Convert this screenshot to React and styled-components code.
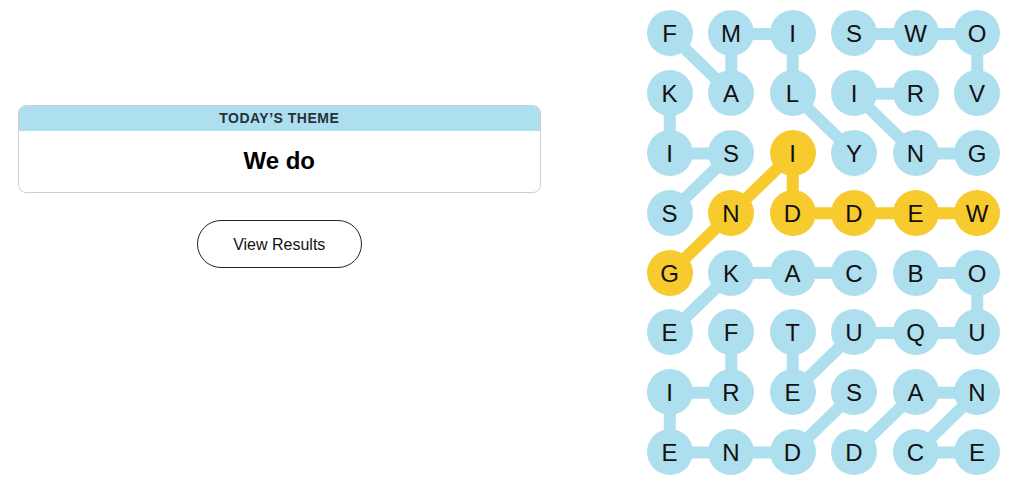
import React from 'react';
import styled, {createGlobalStyle} from 'styled-components';

const CELL_W = 61.5;
const CELL_H = 59.8;

const BLUE = '#aedfee';
const YELLOW = '#f7cb2d';

const GlobalStyle = createGlobalStyle`
  body {
    margin: 0;
    background: #fff;
    font-family: "Liberation Sans", Arial, sans-serif;
    color: #000;
  }
`

const letters = [
    'FMISWO',
    'KALIRV',
    'ISIYNG',
    'SNDDEW',
    'GKACBO',
    'EFTUQU',
    'IRESAN',
    'ENDDCE',
];

const words = [
    {name: 'FAMILY', path: [[0, 0], [1, 1], [0, 1], [0, 2], [1, 2], [2, 3]]},
    {name: 'KISS', path: [[1, 0], [2, 0], [2, 1], [3, 0]]},
    {name: 'VOWS', path: [[1, 5], [0, 5], [0, 4], [0, 3]]},
    {name: 'RING', path: [[1, 4], [1, 3], [2, 4], [2, 5]]},
    {name: 'WEDDING', spangram: true, path: [[3, 5], [3, 4], [3, 3], [3, 2], [2, 2], [3, 1], [4, 0]]},
    {name: 'CAKE', path: [[4, 3], [4, 2], [4, 1], [5, 0]]},
    {name: 'BOUQUET', path: [[4, 4], [4, 5], [5, 5], [5, 4], [5, 3], [6, 2], [5, 2]]},
    {name: 'FRIENDS', path: [[5, 1], [6, 1], [6, 0], [7, 0], [7, 1], [7, 2], [6, 3]]},
    {name: 'DANCE', path: [[7, 3], [6, 4], [6, 5], [7, 4], [7, 5]]},
];

const spangramCells = new Set(
    words.filter(w => w.spangram).flatMap(w => w.path.map(([r, c]) => `${r}-${c}`))
);

const Page = styled.main`
  display: flex;
  align-items: flex-start;
  padding-top: 3.6px;
  width: 1024px;
  height: 490px;
  box-sizing: border-box;
  overflow: hidden;
`

const ThemePanel = styled.section`
  width: 559px;
  box-sizing: border-box;
  padding: 101px 18px 0 17.5px;
  display: flex;
  flex-direction: column;
  align-items: center;
`

const ThemeCard = styled.div`
  width: 100%;
  border: 1px solid #cfcfcf;
  border-radius: 8px;
  overflow: hidden;
  box-sizing: border-box;
`

const ThemeHeader = styled.h2`
  margin: 0;
  height: 25px;
  background: ${BLUE};
  display: flex;
  align-items: center;
  justify-content: center;
  font-size: 14px;
  font-weight: 700;
  letter-spacing: 0.5px;
  text-transform: uppercase;
  color: #25313a;
`

const ThemeTitle = styled.h1`
  margin: 0;
  height: 61px;
  display: flex;
  align-items: center;
  justify-content: center;
  font-size: 24px;
  font-weight: 700;
  color: #000;
`

const ResultsButton = styled.button`
  margin-top: 27px;
  width: 165px;
  height: 48px;
  padding-top: 3px;
  border-radius: 24px;
  border: 1px solid #222;
  background: #fff;
  font-family: "Liberation Sans", Arial, sans-serif;
  font-size: 16px;
  color: #121212;
  cursor: pointer;
`

const Board = styled.div`
  position: relative;
  margin-left: 79.75px;
  display: grid;
  grid-template-columns: repeat(6, ${CELL_W}px);
  grid-template-rows: repeat(8, ${CELL_H}px);
`

const Lines = styled.svg`
  position: absolute;
  inset: 0;
  z-index: 0;
  pointer-events: none;
`

const Cell = styled.div`
  position: relative;
  z-index: 1;
  display: flex;
  align-items: center;
  justify-content: center;
`

const Letter = styled.button`
  width: 46px;
  height: 46px;
  border-radius: 50%;
  border: none;
  padding: 2px 0 0;
  background: ${p => p.$spangram ? YELLOW : BLUE};
  font-family: "Liberation Sans", Arial, sans-serif;
  font-size: 24px;
  color: #111;
  display: flex;
  align-items: center;
  justify-content: center;
`

const center = ([r, c]) => [(c + 0.5) * CELL_W, (r + 0.5) * CELL_H];

const App = () => {
    return (
        <>
            <GlobalStyle/>
            <Page>
                <ThemePanel>
                    <ThemeCard>
                        <ThemeHeader>Today’s Theme</ThemeHeader>
                        <ThemeTitle>We do</ThemeTitle>
                    </ThemeCard>
                    <ResultsButton>View Results</ResultsButton>
                </ThemePanel>

                <Board>
                    <Lines width={CELL_W * 6} height={CELL_H * 8}>
                        {words.map(w => (
                            <polyline
                                key={w.name}
                                points={w.path.map(p => center(p).join(',')).join(' ')}
                                fill="none"
                                stroke={w.spangram ? YELLOW : BLUE}
                                strokeWidth="12"
                                strokeLinejoin="round"
                            />
                        ))}
                    </Lines>
                    {letters.map((row, r) =>
                        row.split('').map((ch, c) => (
                            <Cell key={`${r}-${c}`}>
                                <Letter $spangram={spangramCells.has(`${r}-${c}`)}>{ch}</Letter>
                            </Cell>
                        ))
                    )}
                </Board>
            </Page>
        </>
    );
};

export default App;
